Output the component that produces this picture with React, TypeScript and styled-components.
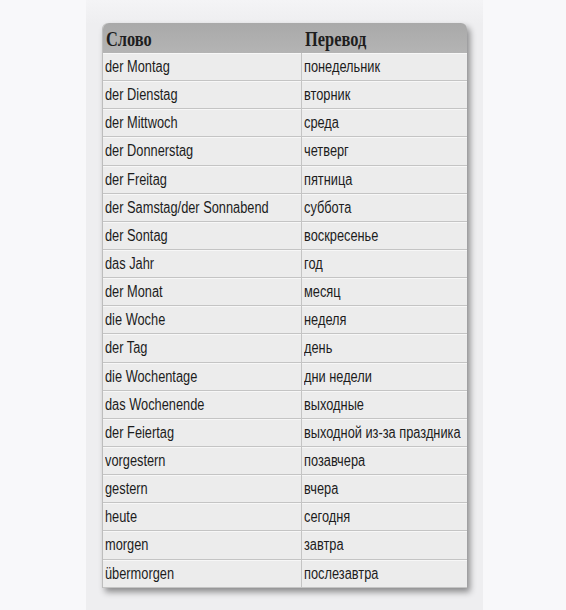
import styled, { createGlobalStyle } from "styled-components";

const GlobalStyle = createGlobalStyle`
  html, body {
    margin: 0;
    padding: 0;
    background: #f8f8fa;
  }
`;

const Page = styled.div`
  width: 566px;
  height: 610px;
  display: flex;
  justify-content: flex-start;
  padding-left: 86px;
  box-sizing: border-box;
  overflow: hidden;
`;

const Panel = styled.div`
  width: 397px;
  height: 610px;
  padding: 23px 0 0 16px;
  box-sizing: border-box;
  background: linear-gradient(to bottom, #f4f4f6 0px, #eeeef0 24px);
`;

const Table = styled.div`
  width: 365px;
  background: #ececec;
  border-left: 1px solid #bdbdbd;
  border-radius: 6px 6px 0 0;
  box-shadow: 3px 4px 6px rgba(0, 0, 0, 0.42);
  box-sizing: border-box;
`;

const HeaderRow = styled.div`
  display: grid;
  grid-template-columns: 199px 165px;
  height: 30px;
  background: linear-gradient(to bottom, #a9a9a9, #b4b4b4);
  border-radius: 6px 6px 0 0;
`;

const HeadCell = styled.div`
  display: flex;
  align-items: center;
  padding: 2px 0 0 3px;
  font-family: "Liberation Serif", "Times New Roman", serif;
  font-weight: bold;
  font-size: 20px;
  color: #1e1e1e;
`;

const Row = styled.div`
  display: grid;
  grid-template-columns: 199px 165px;
  height: 28.15px;
  box-sizing: border-box;
  border-bottom: 1px solid #c4c4c4;
  box-shadow: inset 0 1px 0 #f7f7f7;
  background: #ececec;
`;

const Cell = styled.div<{ $first?: boolean }>`
  display: flex;
  align-items: center;
  padding: 1px 0 0 2px;
  border-right: ${(p) => (p.$first ? "1px solid #c4c4c4" : "none")};
  font-family: "Liberation Sans", Arial, sans-serif;
  font-size: 16px;
  color: #1c1c1c;
  white-space: nowrap;
  overflow: visible;
`;

const Squeezed = styled.span<{ $scale?: number }>`
  display: inline-block;
  transform: scaleX(${(p) => p.$scale ?? 0.8});
  transform-origin: left center;
`;

const words: [string, string][] = [
  ["der Montag", "понедельник"],
  ["der Dienstag", "вторник"],
  ["der Mittwoch", "среда"],
  ["der Donnerstag", "четверг"],
  ["der Freitag", "пятница"],
  ["der Samstag/der Sonnabend", "суббота"],
  ["der Sontag", "воскресенье"],
  ["das Jahr", "год"],
  ["der Monat", "месяц"],
  ["die Woche", "неделя"],
  ["der Tag", "день"],
  ["die Wochentage", "дни недели"],
  ["das Wochenende", "выходные"],
  ["der Feiertag", "выходной из-за праздника"],
  ["vorgestern", "позавчера"],
  ["gestern", "вчера"],
  ["heute", "сегодня"],
  ["morgen", "завтра"],
  ["übermorgen", "послезавтра"],
];

export default function App() {
  return (
    <>
      <GlobalStyle />
      <Page>
        <Panel>
          <Table>
            <HeaderRow>
              <HeadCell>
                <Squeezed $scale={0.82}>Слово</Squeezed>
              </HeadCell>
              <HeadCell>
                <Squeezed $scale={0.82}>Перевод</Squeezed>
              </HeadCell>
            </HeaderRow>
            {words.map(([de, ru]) => (
              <Row key={de}>
                <Cell $first>
                  <Squeezed>{de}</Squeezed>
                </Cell>
                <Cell>
                  <Squeezed>{ru}</Squeezed>
                </Cell>
              </Row>
            ))}
          </Table>
        </Panel>
      </Page>
    </>
  );
}
